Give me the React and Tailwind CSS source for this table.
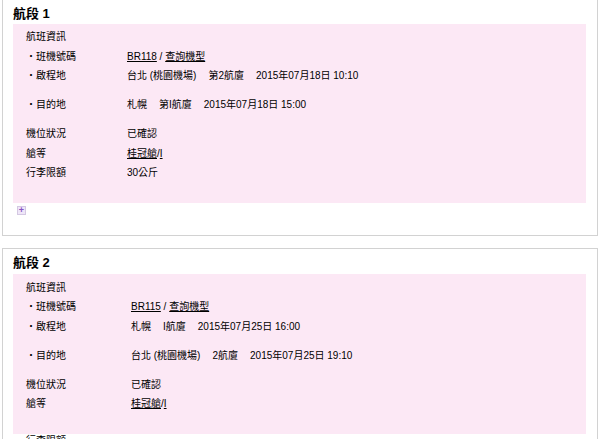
const font = { fontFamily: '"Liberation Sans", "Noto Sans CJK TC", sans-serif' };

const legs = [
  {
    title: '航段 1',
    valueCol: 'w-[101px]',
    flight: 'BR118',
    dep: ['台北 (桃園機場)', '第2航廈', '2015年07月18日 10:10'],
    arr: ['札幌', '第I航廈', '2015年07月18日 15:00'],
    baggage: true,
  },
  {
    title: '航段 2',
    valueCol: 'w-[105px]',
    flight: 'BR115',
    dep: ['札幌', 'I航廈', '2015年07月25日 16:00'],
    arr: ['台北 (桃園機場)', '2航廈', '2015年07月25日 19:10'],
    baggage: false,
  },
];

function Row({ label, labelW, tall, children }) {
  return (
    <div className={`flex ${tall ? 'h-[29px]' : 'h-[19.5px]'}`}>
      <div className={`${labelW} shrink-0`}>{label}</div>
      <div className="flex gap-[12px]">{children}</div>
    </div>
  );
}

function Leg({ leg, first }) {
  const w = leg.valueCol;
  return (
    <div className={`bg-white border border-[#d2d2d2] pl-[10px] pr-[11px] ${first ? 'border-t-0 pb-[20px]' : 'mt-[12px]'}`}>
      <h2 className={`${first ? 'h-[24px]' : 'h-[25px]'} pt-[3px] leading-[21px] text-[13px] font-bold text-black`}>{leg.title}</h2>
      <div className={`bg-[#fce8f5] pl-[13px] ${first ? 'pt-[3px]' : 'pt-[4px]'} pb-[20px]`}>
        <div className="h-[19.5px]">航班資訊</div>
        <Row label="・班機號碼" labelW={w}>
          <span>
            <span className="underline">{leg.flight}</span> / <span className="underline">查詢機型</span>
          </span>
        </Row>
        <Row label="・啟程地" labelW={w} tall>
          {leg.dep.map((t) => <span key={t}>{t}</span>)}
        </Row>
        <Row label="・目的地" labelW={w} tall>
          {leg.arr.map((t) => <span key={t}>{t}</span>)}
        </Row>
        <Row label="機位狀況" labelW={w}>
          <span>已確認</span>
        </Row>
        <Row label="艙等" labelW={w}>
          <span>
            <span className="underline">桂冠艙</span>/<span className="underline">I</span>
          </span>
        </Row>
        {leg.baggage && (
          <Row label="行李限額" labelW={w}>
            <span>30公斤</span>
          </Row>
        )}
      </div>
      {first ? (
        <div className="mt-[3px] ml-[4px] w-[9px] h-[9px] border border-[#d4c8e2] bg-[#efe6f8] flex items-center justify-center text-[#8a55c4] text-[9px] leading-none font-bold">
          +
        </div>
      ) : (
        <div className="pl-[13px] h-[20px] leading-[14px]">行李限額</div>
      )}
    </div>
  );
}

export default function App() {
  return (
    <div className="w-[600px] h-[439px] overflow-hidden bg-white text-[10px] leading-[19.5px] text-black pl-[2px] pr-[2px]" style={font}>
      {legs.map((leg, i) => (
        <Leg key={leg.title} leg={leg} first={i === 0} />
      ))}
    </div>
  );
}
